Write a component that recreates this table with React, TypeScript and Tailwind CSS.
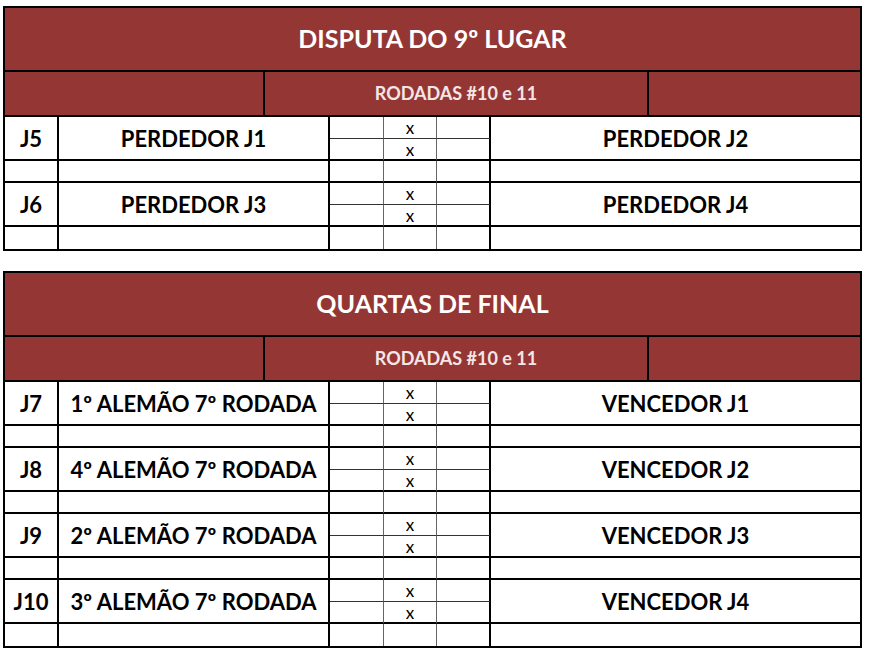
import React from 'react';

interface Match {
    code: string;
    home: string;
    away: string;
}

const disputa: Match[] = [
    { code: 'J5', home: 'PERDEDOR J1', away: 'PERDEDOR J2' },
    { code: 'J6', home: 'PERDEDOR J3', away: 'PERDEDOR J4' },
];

const quartas: Match[] = [
    { code: 'J7', home: '1º ALEMÃO 7º RODADA', away: 'VENCEDOR J1' },
    { code: 'J8', home: '4º ALEMÃO 7º RODADA', away: 'VENCEDOR J2' },
    { code: 'J9', home: '2º ALEMÃO 7º RODADA', away: 'VENCEDOR J3' },
    { code: 'J10', home: '3º ALEMÃO 7º RODADA', away: 'VENCEDOR J4' },
];

function MatchBlock({ match, last }: { match: Match; last: boolean }) {
    const spacerBorder = last ? '' : 'border-b-2 border-black';
    return (
        <div className="grid grid-cols-[54px_271px_54px_53px_54px_1fr] grid-rows-[22px_22px_22px] bg-white">
            <div className="row-span-2 flex items-center justify-center border-r-2 border-b-2 border-black text-[22px] font-bold text-black">
                {match.code}
            </div>
            <div className="row-span-2 flex items-center justify-center border-r-2 border-b-2 border-black text-[22px] font-bold text-black whitespace-nowrap">
                {match.home}
            </div>
            <div className="border-r border-b border-r-[#666] border-b-[#333]" />
            <div className="flex items-center justify-center border-r border-b border-r-[#666] border-b-[#333] text-[17px] leading-none text-black">
                x
            </div>
            <div className="border-r-2 border-b border-r-black border-b-[#333]" />
            <div className="row-span-2 flex items-center justify-center border-b-2 border-black text-[22px] font-bold text-black whitespace-nowrap">
                {match.away}
            </div>
            <div className="border-r border-b-2 border-r-[#666] border-b-black" />
            <div className="flex items-center justify-center border-r border-b-2 border-r-[#666] border-b-black text-[17px] leading-none text-black">
                x
            </div>
            <div className="border-r-2 border-b-2 border-black" />

            <div className={`border-r-2 border-r-black ${spacerBorder}`} />
            <div className={`border-r-2 border-r-black ${spacerBorder}`} />
            <div className={`border-r border-r-[#666] ${spacerBorder}`} />
            <div className={`border-r border-r-[#666] ${spacerBorder}`} />
            <div className={`border-r-2 border-r-black ${spacerBorder}`} />
            <div className={spacerBorder} />
        </div>
    );
}

function Section({ title, matches }: { title: string; matches: Match[] }) {
    return (
        <div className="w-[859px] border-2 border-black">
            <div className="h-[64px] bg-[#943634] border-b-2 border-black flex items-center justify-center text-white font-bold text-[25px]">
                {title}
            </div>
            <div className="flex h-[45px] bg-[#943634] border-b-2 border-black">
                <div className="w-[260px] border-r-2 border-black" />
                <div className="w-[384px] border-r-2 border-black flex items-center justify-center text-[#f4e6e6] font-bold text-[18px]">
                    RODADAS #10 e 11
                </div>
                <div className="flex-1" />
            </div>
            {matches.map((m, i) => (
                <MatchBlock key={m.code} match={m} last={i === matches.length - 1} />
            ))}
        </div>
    );
}

export default function App() {
    return (
        <div
            className="min-h-[657px] bg-white pl-[3px] pt-[6px] flex flex-col gap-[20px]"
            style={{ fontFamily: 'Lato, "Liberation Sans", sans-serif' }}
        >
            <Section title="DISPUTA DO 9º LUGAR" matches={disputa} />
            <Section title="QUARTAS DE FINAL" matches={quartas} />
        </div>
    );
}
